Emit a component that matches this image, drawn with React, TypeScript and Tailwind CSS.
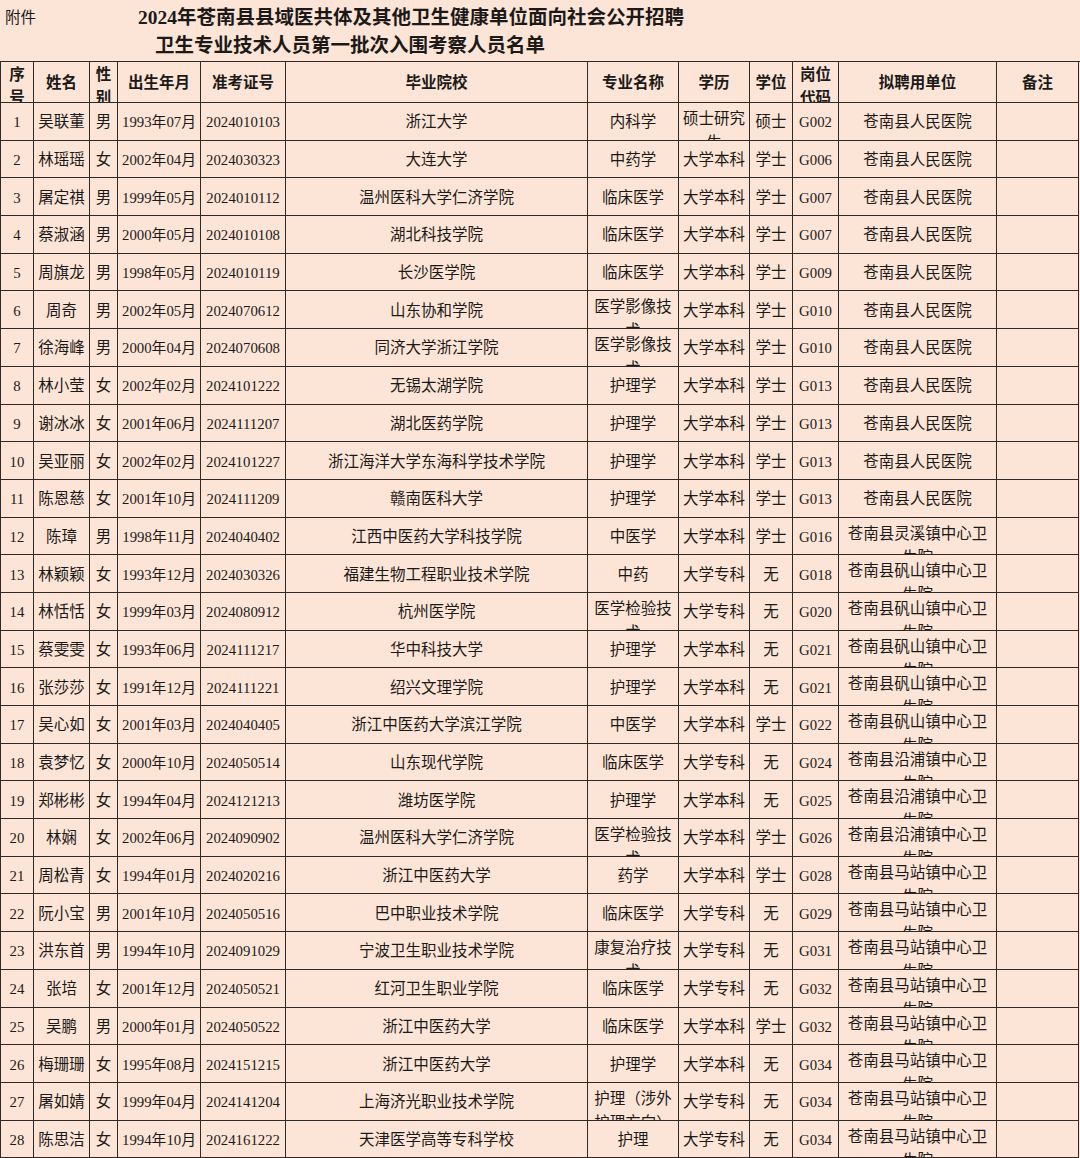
import React from 'react';

type Row = [string, string, string, string, string, string, string, string, string, string, string];

const rows: Row[] = [
  ['1', '吴联董', '男', '1993年07月', '2024010103', '浙江大学', '内科学', '硕士研究生', '硕士', 'G002', '苍南县人民医院'],
  ['2', '林瑶瑶', '女', '2002年04月', '2024030323', '大连大学', '中药学', '大学本科', '学士', 'G006', '苍南县人民医院'],
  ['3', '屠定祺', '男', '1999年05月', '2024010112', '温州医科大学仁济学院', '临床医学', '大学本科', '学士', 'G007', '苍南县人民医院'],
  ['4', '蔡淑涵', '男', '2000年05月', '2024010108', '湖北科技学院', '临床医学', '大学本科', '学士', 'G007', '苍南县人民医院'],
  ['5', '周旗龙', '男', '1998年05月', '2024010119', '长沙医学院', '临床医学', '大学本科', '学士', 'G009', '苍南县人民医院'],
  ['6', '周奇', '男', '2002年05月', '2024070612', '山东协和学院', '医学影像技术', '大学本科', '学士', 'G010', '苍南县人民医院'],
  ['7', '徐海峰', '男', '2000年04月', '2024070608', '同济大学浙江学院', '医学影像技术', '大学本科', '学士', 'G010', '苍南县人民医院'],
  ['8', '林小莹', '女', '2002年02月', '2024101222', '无锡太湖学院', '护理学', '大学本科', '学士', 'G013', '苍南县人民医院'],
  ['9', '谢冰冰', '女', '2001年06月', '2024111207', '湖北医药学院', '护理学', '大学本科', '学士', 'G013', '苍南县人民医院'],
  ['10', '吴亚丽', '女', '2002年02月', '2024101227', '浙江海洋大学东海科学技术学院', '护理学', '大学本科', '学士', 'G013', '苍南县人民医院'],
  ['11', '陈恩慈', '女', '2001年10月', '2024111209', '赣南医科大学', '护理学', '大学本科', '学士', 'G013', '苍南县人民医院'],
  ['12', '陈璋', '男', '1998年11月', '2024040402', '江西中医药大学科技学院', '中医学', '大学本科', '学士', 'G016', '苍南县灵溪镇中心卫生院'],
  ['13', '林颖颖', '女', '1993年12月', '2024030326', '福建生物工程职业技术学院', '中药', '大学专科', '无', 'G018', '苍南县矾山镇中心卫生院'],
  ['14', '林恬恬', '女', '1999年03月', '2024080912', '杭州医学院', '医学检验技术', '大学专科', '无', 'G020', '苍南县矾山镇中心卫生院'],
  ['15', '蔡雯雯', '女', '1993年06月', '2024111217', '华中科技大学', '护理学', '大学本科', '无', 'G021', '苍南县矾山镇中心卫生院'],
  ['16', '张莎莎', '女', '1991年12月', '2024111221', '绍兴文理学院', '护理学', '大学本科', '无', 'G021', '苍南县矾山镇中心卫生院'],
  ['17', '吴心如', '女', '2001年03月', '2024040405', '浙江中医药大学滨江学院', '中医学', '大学本科', '学士', 'G022', '苍南县矾山镇中心卫生院'],
  ['18', '袁梦忆', '女', '2000年10月', '2024050514', '山东现代学院', '临床医学', '大学专科', '无', 'G024', '苍南县沿浦镇中心卫生院'],
  ['19', '郑彬彬', '女', '1994年04月', '2024121213', '潍坊医学院', '护理学', '大学本科', '无', 'G025', '苍南县沿浦镇中心卫生院'],
  ['20', '林娴', '女', '2002年06月', '2024090902', '温州医科大学仁济学院', '医学检验技术', '大学本科', '学士', 'G026', '苍南县沿浦镇中心卫生院'],
  ['21', '周松青', '女', '1994年01月', '2024020216', '浙江中医药大学', '药学', '大学本科', '学士', 'G028', '苍南县马站镇中心卫生院'],
  ['22', '阮小宝', '男', '2001年10月', '2024050516', '巴中职业技术学院', '临床医学', '大学专科', '无', 'G029', '苍南县马站镇中心卫生院'],
  ['23', '洪东首', '男', '1994年10月', '2024091029', '宁波卫生职业技术学院', '康复治疗技术', '大学专科', '无', 'G031', '苍南县马站镇中心卫生院'],
  ['24', '张培', '女', '2001年12月', '2024050521', '红河卫生职业学院', '临床医学', '大学专科', '无', 'G032', '苍南县马站镇中心卫生院'],
  ['25', '吴鹏', '男', '2000年01月', '2024050522', '浙江中医药大学', '临床医学', '大学本科', '学士', 'G032', '苍南县马站镇中心卫生院'],
  ['26', '梅珊珊', '女', '1995年08月', '2024151215', '浙江中医药大学', '护理学', '大学本科', '无', 'G034', '苍南县马站镇中心卫生院'],
  ['27', '屠如婧', '女', '1999年04月', '2024141204', '上海济光职业技术学院', '护理（涉外护理方向）', '大学专科', '无', 'G034', '苍南县马站镇中心卫生院'],
  ['28', '陈思洁', '女', '1994年10月', '2024161222', '天津医学高等专科学校', '护理', '大学专科', '无', 'G034', '苍南县马站镇中心卫生院'],
];

const headers = ['序号', '姓名', '性别', '出生年月', '准考证号', '毕业院校', '专业名称', '学历', '学位', '岗位代码', '拟聘用单位', '备注'];

// numeric-ish columns get a slightly smaller size, like the Times digits in the original
const numericCols = [0, 3, 4, 9];

const gridCols = 'grid grid-cols-[33px_56px_28px_83px_85px_302px_91px_71px_43px_46px_158px_82px]';
const cellBase =
  'border-r-[1.5px] border-b-[1.5px] border-[#2f2a27] overflow-hidden flex flex-col [justify-content:safe_center] text-center px-[3px]';

export default function App() {
  return (
    <div
      className="w-[1080px] h-[1158px] overflow-hidden bg-[#fce5d7] text-[#1c1a19]"
      style={{ fontFamily: "'Liberation Serif', 'Noto Sans CJK SC', serif" }}
    >
      {/* title */}
      <div className="flex h-[61px]">
        <div className="w-[138px] pl-[5px] pt-[8px] text-[15.5px] leading-[20px]">附件</div>
        <div className="flex flex-col pt-[4px] font-bold text-[19.5px] leading-[28px]">
          <div>2024年苍南县县域医共体及其他卫生健康单位面向社会公开招聘</div>
          <div className="ml-[17px]">卫生专业技术人员第一批次入围考察人员名单</div>
        </div>
      </div>

      {/* table */}
      <div className="border-l-[1.5px] border-t-[1.5px] border-[#2f2a27] w-[1079.5px]">
        <div className={`${gridCols} h-[41px]`}>
          {headers.map((h) => (
            <div key={h} className={`${cellBase} font-bold text-[15.5px] leading-[23px] pt-[1px] pb-[1px]`}>
              <div>{h}</div>
            </div>
          ))}
        </div>
        {rows.map((r) => (
          <div key={r[0]} className={`${gridCols} h-[37.7px]`}>
            {[...r, ''].map((v, i) => (
              <div
                key={i}
                className={`${cellBase} leading-[24px] pt-[4px] pb-[2px] ${
                  numericCols.includes(i) ? 'text-[14.8px]' : 'text-[15.5px]'
                }`}
              >
                <div>{v}</div>
              </div>
            ))}
          </div>
        ))}
      </div>
    </div>
  );
}
